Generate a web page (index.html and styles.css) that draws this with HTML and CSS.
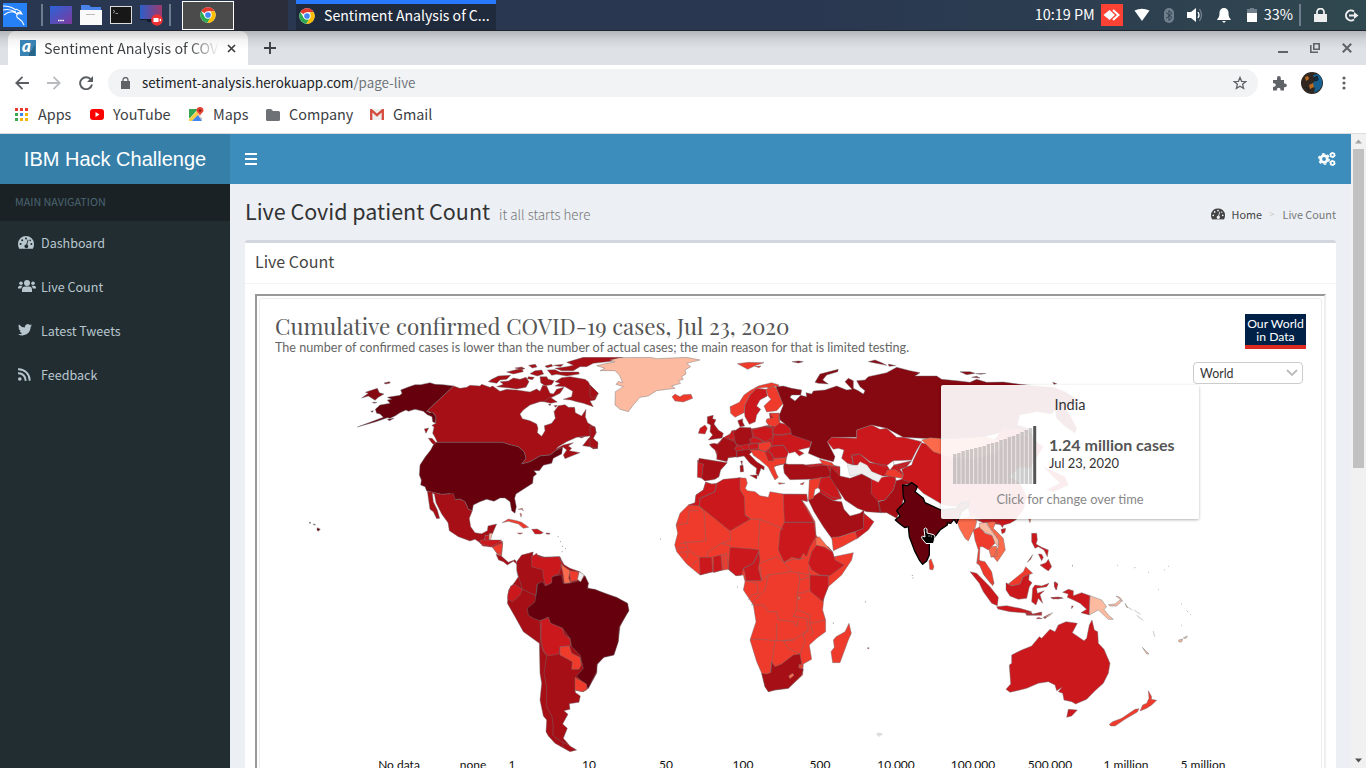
FILE: index.html
```html
<!DOCTYPE html>
<html lang="en">
<head>
<meta charset="utf-8">
<title>Sentiment Analysis of COVID</title>
<link rel="stylesheet" href="styles.css">
</head>
<body>
<svg class="defs" width="0" height="0">
  <defs>
    <linearGradient id="g1" x1="0" y1="0" x2="1" y2="1"><stop offset="0" stop-color="#2b63d9"/><stop offset="1" stop-color="#7d3a9c"/></linearGradient>
    <linearGradient id="g2" x1="0" y1="0" x2="1" y2="0"><stop offset="0" stop-color="#2b5fc9"/><stop offset="1" stop-color="#a0386c"/></linearGradient>
    <symbol id="chrome" viewBox="0 0 48 48"><circle cx="24" cy="24" r="23" fill="#fff"/><path d="M24 24 4 12.5A23 23 0 0 1 44 13H24Z" fill="#e33b2e"/><path d="M4 12.5A23 23 0 0 0 22 47L33.500 29.500 24 24 14.500 29.500Z" fill="#2da94f"/><path d="M44 13A23 23 0 0 1 22 47L33.500 29.500V13Z" fill="#fdbd00"/><circle cx="24" cy="24" r="11" fill="#fff"/><circle cx="24" cy="24" r="8.500" fill="#4384f3"/></symbol>
    <symbol id="gauge" viewBox="0 0 16 13"><path d="M8 0a8 8 0 0 0-8 8c0 1.600.4 3.300 1.200 4.700h13.600A9 9 0 0 0 16 8a8 8 0 0 0-8-8Z"/><g class="hole"><circle cx="2.600" cy="8" r="1"/><circle cx="4.200" cy="4.200" r="1"/><circle cx="8" cy="2.500" r="1"/><circle cx="13.400" cy="8" r="1"/><circle cx="12.200" cy="4.400" r=".8"/><path d="M9.800 3.600 10.600 4 9.200 8.600a1.900 1.900 0 1 1-1-.2Z"/></g></symbol>
  </defs>
</svg>

<header class="panel">
  <svg class="kali" width="24" height="24" viewBox="0 0 24 24"><rect width="24" height="24" fill="#2680f6"/><path d="M0 3c5 0 9 1 13 4M0 7c4-1 9 0 13 2M1 12c5-4 10-4 13-1M13 6c3 1 5 3 6 5-4-1-6 0-5 3 1 2 5 2 7 8M14 10c2-1 4 0 5 1" fill="none" stroke="#fff" stroke-width="1.100"/></svg>
  <i class="sep sep-a"></i>
  <svg class="pi" width="22" height="18" viewBox="0 0 22 18"><rect width="22" height="18" fill="url(#g1)"/><path d="M8 14.500h6" stroke="#fff" stroke-width="1.500" stroke-dasharray="1.500 .7"/></svg>
  <svg class="pi" width="22" height="20" viewBox="0 0 22 20"><path d="M1 6V0h8l2 2h10v4Z" fill="#4a83ea"/><rect y="5" width="22" height="15" fill="#fafafa"/><path d="M6 9.500h9" stroke="#bbb"/></svg>
  <svg class="pi" width="22" height="18" viewBox="0 0 22 18"><rect x=".5" y=".5" width="21" height="17" fill="#171717" stroke="#ddd"/><path d="m3 4 2 1.500L3 7M5.500 7.500H8" fill="none" stroke="#ccc" stroke-width=".7"/></svg>
  <svg class="pi" width="23" height="22" viewBox="0 0 23 22"><rect width="22" height="14" y="1" fill="url(#g2)"/><path d="M0 15h22v1H0zM7 16h6v2H7z" fill="#111b29"/><circle cx="17" cy="16" r="5.800" fill="#ee3135"/><rect x="13.500" y="14" width="5" height="4" fill="#fff"/><path d="m19 16 2-1.600v3.200Z" fill="#fff"/></svg>
  <i class="sep sep-b"></i>
  <div class="desk"><svg width="16" height="16"><use href="#chrome"/></svg></div>
  <div class="deskoff"></div>
  <div class="task"><svg width="16" height="16"><use href="#chrome"/></svg><span>Sentiment Analysis of C...</span></div>
  <div class="tray">
    <span class="clock">10:19 PM</span>
    <svg width="22" height="22" viewBox="0 0 22 22"><rect width="22" height="22" fill="#fb4235"/><path d="m2.500 11 6-5 5.500 5-5.500 5Z" fill="#fff"/><path d="m12 6 5.500 5-5.500 5" fill="none" stroke="#fff" stroke-width="2"/></svg>
    <svg class="wifi" width="16" height="14" viewBox="0 0 16 14"><path d="M.5 2.500Q8-1 15.500 2.500L8 13Z" fill="#fff"/></svg>
    <svg class="bt" width="12" height="15" viewBox="0 0 12 15"><rect x="1" width="10" height="15" rx="5" fill="#717f8d"/><path d="m3 4.500 6 5-3 3v-10l3 3-6 5" fill="none" stroke="#2c3f50"/></svg>
    <svg class="vol" width="16" height="14" viewBox="0 0 16 14"><path d="M0 4h4l5-4v14L4 10H0Z" fill="#fff"/><path d="M11 4q2 3 0 6" fill="none" stroke="#fff" stroke-width="1.300"/><path d="M12.500 1q4 6 0 12" fill="none" stroke="#75828c" stroke-width="1.300"/></svg>
    <svg class="bell" width="14" height="15" viewBox="0 0 14 15"><path d="M7 0a4.500 4.500 0 0 0-4.500 4.800C2.500 9 1.500 9.500 0 12h14c-1.500-2.500-2.500-3-2.500-7.200A4.500 4.500 0 0 0 7 0ZM5 13h4l-2 2Z" fill="#fff"/></svg>
    <svg class="bat" width="10" height="14" viewBox="0 0 10 14"><path d="M0 1h3V0h4v1h3v13H0Z" fill="#71808a"/><path d="M0 5h10v9H0Z" fill="#fff"/></svg>
    <span class="pct">33%</span>
    <i class="sep sep-c"></i>
    <svg class="plock" width="13" height="14" viewBox="0 0 13 14"><path d="M0 6h13v8H0Z" fill="#eee"/><path d="M3 7V4a3.500 3.500 0 0 1 7 0v3" fill="none" stroke="#eee" stroke-width="1.800"/></svg>
    <svg class="logout" width="15" height="13" viewBox="0 0 15 13"><path d="M10 2.500A5 5 0 1 0 10 10.500" fill="none" stroke="#eee" stroke-width="2"/><path d="M5 6.500h6" stroke="#eee" stroke-width="2"/><path d="m10 3 4.500 3.500L10 10Z" fill="#eee"/></svg>
  </div>
</header>

<div class="tabs">
  <div class="tab">
    <svg width="16" height="16" viewBox="0 0 16 16"><rect width="16" height="16" fill="#3883b4"/><path d="m9 14 6-9v11H9Z" fill="#276588"/></svg>
    <b class="fav">a</b>
    <span class="tabname">Sentiment Analysis of COV</span>
    <svg class="tabx" width="9" height="9" viewBox="0 0 9 9"><path d="m1 1 7 7M8 1 1 8" stroke="#3c4043" stroke-width="1.700"/></svg>
  </div>
  <svg class="plus" width="12" height="12" viewBox="0 0 12 12"><path d="M6 0v12M0 6h12" stroke="#3c4043" stroke-width="1.900"/></svg>
  <div class="win">
    <svg width="10" height="10" viewBox="0 0 10 10"><path d="M0 9h10" stroke="#5f6368" stroke-width="2"/></svg>
    <svg width="10" height="10" viewBox="0 0 10 10"><path d="M3.800.8h5.400v5.400H3.800ZM.8 2v7.200H8" fill="none" stroke="#5f6368" stroke-width="1.600"/></svg>
    <svg width="10" height="10" viewBox="0 0 10 10"><path d="m.8.800 8.400 8.400M9.200.8.8 9.200" stroke="#5f6368" stroke-width="2"/></svg>
  </div>
</div>

<div class="toolbar">
  <svg class="nav" width="14" height="14" viewBox="0 0 14 14"><path d="M14 7H1.500M7.500.8 1.300 7l6.200 6.200" fill="none" stroke="#5a5e63" stroke-width="1.800"/></svg>
  <svg class="nav" width="14" height="14" viewBox="0 0 14 14"><path d="M0 7h12.500M6.500.8 12.700 7l-6.200 6.200" fill="none" stroke="#b9bbbe" stroke-width="1.800"/></svg>
  <svg class="nav reload" width="14" height="14" viewBox="0 0 14 14"><path d="M12 3.700A6 6 0 1 0 13 8.500" fill="none" stroke="#5a5e63" stroke-width="1.900"/><path d="M14 0v6H8Z" fill="#5a5e63"/></svg>
  <div class="url">
    <svg width="9" height="12" viewBox="0 0 9 12"><path d="M0 4h9v8H0Z" fill="#5f6368"/><path d="M2 5V3a2.500 2.500 0 0 1 5 0v2" fill="none" stroke="#5f6368" stroke-width="1.300"/></svg>
    <span>setiment-analysis.herokuapp.com<em>/page-live</em></span>
    <svg class="star" width="14" height="14" viewBox="0 0 14 14"><path d="m7 1.400 1.600 3.900 4.200.3-3.200 2.700 1 4.100L7 10.200l-3.600 2.200 1-4.100L1.200 5.600l4.200-.3Z" fill="none" stroke="#5f6368" stroke-width="1.300"/></svg>
  </div>
  <svg class="puz" width="15" height="15" viewBox="0 0 15 15"><path d="M1 4h4V2a1.900 1.900 0 0 1 3.800 0v2H12v3.500h1a1.800 1.800 0 0 1 0 3.700h-1V14.500H8.500v-1a1.800 1.800 0 0 0-3.600 0v1H1v-3.700h1a1.700 1.700 0 0 0 0-3.500H1Z" fill="#5f6368"/></svg>
  <svg class="ava" width="22" height="22" viewBox="0 0 22 22"><circle cx="11" cy="11" r="11" fill="#302820"/><path d="M12 3q7-3 9 5 2 9-8 13l1-5-3-3 3-5Z" fill="#17608f"/><path d="m4 5 3-1 1 3-3 2ZM8 13l4-2 1 4-4 2Z" fill="#b96a20"/><path d="m13 6 3-2 1 4-3 1ZM5 15l3 4" stroke="#111f2b" fill="#173040"/></svg>
  <svg class="dots" width="4" height="14" viewBox="0 0 4 14"><g fill="#5f6368"><circle cx="2" cy="2" r="1.600"/><circle cx="2" cy="7" r="1.600"/><circle cx="2" cy="12" r="1.600"/></g></svg>
</div>

<nav class="marks">
  <a class="m1"><svg width="13" height="13" viewBox="0 0 13 13"><path d="M0 1.500h13" stroke="#e8382c" stroke-width="3" stroke-dasharray="3 2"/><path d="M0 6.500h3" stroke="#3ba757" stroke-width="3"/><path d="M5 6.500h3" stroke="#3f83f0" stroke-width="3"/><path d="M10 6.500h3" stroke="#f4b400" stroke-width="3"/><path d="M0 11.500h3" stroke="#3ba757" stroke-width="3"/><path d="M5 11.500h8" stroke="#f4b400" stroke-width="3" stroke-dasharray="3 2"/></svg><span>Apps</span></a>
  <a class="m2"><svg width="14" height="11" viewBox="0 0 14 11"><rect width="14" height="11" rx="3" fill="#f00"/><path d="m5.500 3 4 2.500-4 2.500Z" fill="#fff"/></svg><span>YouTube</span></a>
  <a class="m3"><svg width="15" height="15" viewBox="0 0 15 15"><path d="M0 2h13v12H0Z" fill="#fff"/><path d="M0 2h9L1 11H0Z" fill="#35a652"/><path d="m0 12 8-8 2 4-7 6H0Z" fill="#f6cd45"/><path d="m3 14 6-6 4 6Z" fill="#4384f3"/><path d="m10 9 3 2v3Z" fill="#bbb"/><path d="M11 0a3.500 3.500 0 0 0-3.500 3.500C7.500 6 11 6 11 10c0-4 3.500-4 3.500-6.500A3.500 3.500 0 0 0 11 0Z" fill="#e64335"/><circle cx="11" cy="3.500" r="1.200" fill="#811f18"/></svg><span>Maps</span></a>
  <a class="m4"><svg width="14" height="12" viewBox="0 0 14 12"><path d="M0 1.500Q0 0 1.500 0H5l2 2h5.500Q14 2 14 3.500v7q0 1.500-1.500 1.500h-11Q0 12 0 10.500Z" fill="#6e7276"/></svg><span>Company</span></a>
  <a class="m5"><svg width="14" height="11" viewBox="0 0 14 11"><path d="M0 0h14v11H0Z" fill="#eee"/><path d="M1.200 11V1L7 6.200 12.800 1v10" fill="none" stroke="#d54b3d" stroke-width="2.300"/></svg><span>Gmail</span></a>
</nav>

<div class="page">
  <aside class="side">
    <div class="brand">IBM Hack Challenge</div>
    <div class="sidehead">MAIN NAVIGATION</div>
    <a class="item"><svg width="16" height="13"><use href="#gauge"/></svg>Dashboard</a>
    <a class="item"><svg width="18" height="13" viewBox="0 0 18 13"><circle cx="9" cy="3" r="3"/><circle cx="3" cy="3.200" r="1.800"/><circle cx="15" cy="3.200" r="1.800"/><path d="M4 12V10q0-3.400 3-3.400h4q3 0 3 3.400v2ZM0 8.500V7.500Q0 5.700 2 5.700h2.500Q3.500 7 3.200 8.500ZM18 8.500V7.500q0-1.800-2-1.800h-2.500q1 1.300 1.300 2.800Z"/></svg>Live Count</a>
    <a class="item"><svg width="14" height="12" viewBox="0 0 14 12"><path d="M14 1.400q-.7.300-1.600.5Q13.300 1.300 13.600.3q-.8.500-1.800.7A2.900 2.900 0 0 0 6.900 3.600Q3.200 3.500 1 .6A2.900 2.900 0 0 0 1.800 4.400L.6 4Q.7 6.300 2.900 6.900l-1.300.1q.6 1.800 2.700 2Q2.500 10.500 0 10.200 2 11.400 4.400 11.400c5.300 0 8.300-4.400 8.200-8.500Q13.500 2.200 14 1.400Z"/></svg>Latest Tweets</a>
    <a class="item"><svg width="13" height="13" viewBox="0 0 13 13"><circle cx="1.800" cy="11" r="1.800"/><path d="M0 5.200A7 7 0 0 1 7.500 12.800M0 1.200A11 11 0 0 1 11.600 12.800" fill="none" stroke="#b8c7ce" stroke-width="1.900"/></svg>Feedback</a>
  </aside>
  <div class="main">
    <div class="navbar">
      <svg width="12" height="12" viewBox="0 0 12 12"><path d="M0 1h12M0 6h12M0 11h12" stroke="#fff" stroke-width="2"/></svg>
      <svg width="18" height="14" viewBox="0 0 18 14"><circle cx="6" cy="7" r="3.300" fill="none" stroke="#fff" stroke-width="2.800"/><circle cx="6" cy="7" r="5.200" fill="none" stroke="#fff" stroke-width="1.600" stroke-dasharray="2.700 2.740"/><g fill="none" stroke="#fff"><circle cx="14.500" cy="3" r="1.900" stroke-width="1.700"/><circle cx="14.500" cy="3" r="2.700" stroke-width=".8" stroke-dasharray="1.400"/><circle cx="14.500" cy="11" r="1.900" stroke-width="1.700"/><circle cx="14.500" cy="11" r="2.700" stroke-width=".8" stroke-dasharray="1.400"/></g></svg>
    </div>
    <div class="heading">
      <h1>Live Covid patient Count</h1><small>it all starts here</small>
      <div class="crumb"><svg width="14" height="12" viewBox="0 0 16 13"><use href="#gauge"/></svg><span class="home">Home</span><span class="gt">&gt;</span><span class="cur">Live Count</span></div>
    </div>
    <section class="box">
      <h3>Live Count</h3>
      <div class="frame"><div class="chart">
        <div class="chead">
          <div><h2>Cumulative confirmed COVID-19 cases, Jul 23, 2020</h2><p>The number of confirmed cases is lower than the number of actual cases; the main reason for that is limited testing.</p></div>
          <div class="owid">Our World<br>in Data</div>
        </div>
        <svg class="map" width="1060" height="414" viewBox="260 357 1060 414">
          <g class="c" transform="translate(300 350) scale(.33333)">
            <path class="k6" d="M302 120 325 111 345 104 362 104 390 98 405 103 430 104 461 108 380 184 390 188 396 184 408 200 407 220 398 215 396 200 382 194 370 184 345 178 325 184 318 180 300 188 285 198 270 205 262 203 225 216 172 231 210 217 250 202 240 192 230 190 226 178 240 165 270 160 262 150 275 148 262 142 300 136 306 130Z"/>
            <path class="k6" d="M28 516l5 3-4 1ZM40 521l7 4-5 0ZM52 533l9 5-7 6-3-5ZM212 184l8-2-3 5ZM262 208l20-3-14 7Z"/>
            <path class="k5" d="M185 144 205 130 196 127 232 115 238 128 252 132 235 142 225 151 205 138ZM252 99l16-4 3 4-14 3ZM217 157l14 0-8 3Z"/>
            <path class="k4" d="M461 108 480 115 500 112 510 106 540 108 545 103 570 112 578 108 600 124 620 118 650 120 690 126 710 117 720 124 728 106 740 108 750 130 760 132 770 118 792 112 780 130 750 145 735 155 720 155 690 165 670 180 660 192 667 206 690 212 710 222 714 235 712 248 725 259 735 242 733 227 755 220 766 205 762 185 775 167 795 164 805 172 824 172 826 188 845 198 858 178 856 200 863 218 885 232 889 248 870 258 830 262 800 275 775 290 768 297 790 285 820 278 805 288 815 295 808 302 840 308 820 316 795 326 790 315 800 300 790 292 770 300 750 315 720 318 690 335 665 342 678 325 672 305 655 290 625 283 608 277 412 277 405 262 398 250 402 232 396 226 408 220 408 200 400 188 380 184Z"/>
            <path class="k4" d="M848 287 868 262 878 264 870 277 893 275 893 295 880 297 870 290ZM385 265 396 265 413 283 408 290 395 278ZM373 237 386 234 378 250ZM765 95 785 83 810 80 855 88 865 95 870 105 895 130 885 150 870 153 880 170 850 160 830 155 812 150 790 148 815 140 818 124 795 110 765 108 780 100ZM800 37 850 22 970 22 935 34 880 40 860 50 840 50 820 62 785 62 765 55 800 50 820 46ZM600 95 625 93 640 84 660 88 678 82 687 95 678 112 650 117 620 113 590 110 610 103ZM565 95 575 88 595 78 632 76 620 88 600 90 590 100ZM620 66 665 55 670 65 640 72ZM645 54l20-3 10 5-12 3ZM686 46l20-3 5 8-14 3ZM690 71 705 62 725 60 731 72 712 78ZM720 80 740 80 745 88 763 92 755 104 735 107 722 98ZM742 60 765 59 780 66 836 66 838 72 800 78 770 73 755 76ZM735 48l20-5 3 6-17 4ZM760 46l30-3-8 7ZM685 80l18 2-6 7-15-3ZM732 155l18-14 22 15-20 4ZM745 163l8-1-3 5ZM762 167l10-1-5 6ZM838 262l18-4-10 6Z"/>
            <path class="k6" d="M410 277H608L625 283 655 290 672 305 678 325 665 342 690 335 720 318 750 315 770 300 788 292 785 312 760 325 755 340 730 346 718 362 702 362 710 372 700 380 698 400 670 418 648 432 644 445 649 470 645 490 635 482 630 455 615 444 600 444 582 454 560 448 540 455 520 465 517 482 505 478 495 455 480 447 465 450 450 431 425 433 395 427 380 423 375 410 362 405 364 390 358 375 360 345 375 322 392 300 400 285Z"/>
            <path class="k4" d="M382 423 425 433 460 431 466 450 480 447 495 455 505 478 517 482 508 505 512 530 525 548 545 551 562 542 564 528 590 522 580 545 577 552 568 556 556 556 554 568 540 578 525 568 510 573 475 560 448 542 444 518 425 492 408 458 403 432 397 430 400 455 412 480 419 505 410 506 400 485 390 478 388 465 385 445Z"/>
            <path class="k3" d="M540 578 554 568 556 556 568 556 568 574 608 574 606 583 580 592 548 588ZM695 538 712 537 730 548 722 552 705 552ZM690 610 697 607 700 620 720 618 735 622 780 622 790 640 800 660 720 660 695 640Z"/>
            <path class="k1" d="M568 550 577 550 572 570 567 568Z"/>
            <path class="k2" d="M580 594 608 580 605 618 592 613ZM607 518 625 507 650 512 665 517 686 532 670 535 655 522 625 514ZM652 549l16 0-8 4ZM655 478l12-3 3 8-4-5ZM660 489l5 4-2 8Z"/>
            <path class="k4" d="M588 613 604 618 625 637 645 629 654 645 640 634 622 645 610 635 596 630ZM738 549l12 1-2 3-9-1Z"/>
            <path class="isl" d="M773 560h3M780 575h3M786 589h3M785 605h3M795 596h3"/>
          </g>
          <g class="c" transform="translate(480 540) scale(.33333)">
            <path class="k4" d="M110 65 125 45 160 36 155 50 175 45 190 52 240 50 245 70 270 85 300 95 315 108 325 145 370 158 410 175 440 190 445 210 420 260 415 300 400 345 370 352 350 375 350 400 325 445 310 455 285 450 287 458 301 468 297 487 268 491 270 508 252 512 264 523 248 552 262 565 250 595 270 618 290 630 270 635 225 610 205 588 198 575 200 540 190 528 180 480 185 430 180 400 178 310 130 275 105 230 82 190 86 150 105 125 115 110 110 90Z"/>
            <path class="k6" d="M172 132 188 125 195 137 213 130 215 110 245 104 250 130 265 130 300 122 315 108 326 130 322 145 345 148 370 158 410 172 443 190 447 212 418 260 415 305 402 345 372 352 352 372 350 395 325 445 290 408 310 385 300 345 275 320 270 295 248 265 210 250 205 232 180 242 160 235 145 225 142 205 165 185Z"/>
            <path class="k3" d="M155 50 170 40 175 50 195 52 237 50 245 70 238 100 216 110 215 128 197 137 190 110 188 90 155 80ZM180 243 205 232 212 250 248 265 252 285 270 295 272 318 240 320 238 342 205 348 190 335 183 300ZM92 138 105 133 127 148 120 165 98 185 83 178 83 165ZM0 0h65l-12 10-23 10-30-10Z"/>
            <path class="k2" d="M240 320 268 318 275 340 300 352 304 375 297 388 275 388 277 365 240 345ZM285 412 320 432 320 450 305 455 285 450ZM268 92 295 95 293 120 272 125ZM37 22 68 8 65 38 52 40Z"/>
            <path class="k1a" d="M243 72 255 82 270 92 266 115 272 128 253 130 250 105Z"/>
            <path class="kn" d="M298 95 312 105 302 125 293 118Z"/>
            <path class="ln" d="M110 95 122 130 127 148 168 167 172 132M185 248 180 310 200 350 192 400 200 440 200 500 216 530 220 560 218 585 240 602 265 615M248 605l2 18"/>
          </g>
          <g class="c" transform="translate(590 350) scale(.33333)">
            <path class="k3" d="M432 245 485 236 525 230 545 228 600 245 640 262 605 298 588 310 588 340 548 350 530 338 508 306 484 306 440 320 385 328 372 292 402 262Z"/>
            <path class="k3" d="M538 190 568 190 570 235 545 235ZM645 345 700 340 750 350 750 400 690 400 660 388Z"/>
            <path class="k1" d="M20 47 50 40 75 36 60 30 90 23 180 22 200 26 290 22 330 30 290 40 302 50 285 60 288 72 275 80 280 88 265 92 272 100 245 108 255 115 200 122 175 138 150 142 130 165 115 185 90 178 75 165 76 125 100 110 78 103 85 94 98 98 88 75 75 62 30 62 45 55Z"/>
            <path class="k2" d="M246 140 255 132 270 140 280 134 303 133 308 145 280 156 255 153ZM442 41 475 37 522 38 500 45 473 58 455 48ZM495 49l18-1-6 5ZM420 170 448 157 462 135 480 122 505 108 545 98 567 105 563 112 550 108 540 116 530 112 500 115 480 135 465 165 462 188 435 202 422 190ZM528 118 550 108 560 115 570 140 580 160 560 182 530 186 522 168 543 148 534 138ZM540 190 568 190 566 210 572 222 560 232 535 225 528 215 530 207 550 203ZM505 280 540 275 545 290 525 305 505 298ZM482 300 505 300 530 305 537 330 553 325 590 323 585 342 560 346 552 352 560 372 565 382 555 390 545 372 535 352 510 330 490 316ZM565 398l20 2-18 3ZM630 402l13-5-5 8Z"/>
            <path class="k3" d="M325 250 330 235 345 225 352 235 345 252ZM463 186 465 165 480 135 500 115 528 118 532 138 510 150 500 168 512 178 500 195 496 215 478 223 465 200ZM550 235 570 218 595 225 607 248 575 257 548 252ZM485 240 525 228 547 235 550 262 525 276 495 262ZM415 265 425 242 435 240 433 267 420 270ZM323 330 341 340 337 385 322 382ZM433 292 450 287 460 300 440 305ZM475 285 505 278 505 295 480 299ZM478 265 500 262 523 275 500 281 480 278ZM524 303 545 310 552 332 535 333ZM540 290 580 285 595 308 590 322 555 325 538 305ZM550 255 610 250 640 262 665 270 660 292 625 300 642 310 628 318 615 305 598 310 580 286 545 287Z"/>
            <path class="k4" d="M352 200 370 196 368 206 378 209 372 222 385 240 400 250 396 264 355 270 368 255 360 245 362 225 352 220ZM443 212 458 206 458 216 464 228 450 230ZM430 245 450 232 483 233 488 262 478 268 483 280 450 287 436 280ZM358 283 372 280 385 283 400 262 435 275 440 288 433 295 440 305 440 320 415 322 411 335 380 328 382 305 365 292ZM327 325 412 338 392 360 387 380 375 388 345 393 335 385 340 342 325 338ZM440 303 475 298 485 306 478 313 500 335 523 350 522 360 513 355 505 378 498 370 500 355 480 340 462 318 440 322ZM480 376l22-1-2 12ZM450 347l9-2 2 20-10 1ZM452 333l5 0-1 12ZM525 228l14 -2 0 5ZM580 350 583 340 595 343 640 343 660 350 705 345 720 350 725 380 690 385 655 388 600 389 583 370ZM0 228 15 230 18 250 10 265 24 278 22 296 0 290ZM0 105 25 130 10 145 0 140Z"/>
          </g>
          <g class="c" transform="translate(660 460) scale(.33333)">
            <path class="k2" d="M137 67 155 72 170 70 240 53 258 55 262 70 256 85 262 92 285 95 300 107 325 112 330 95 370 102 440 103 443 122 425 120 440 140 465 185 468 225 480 240 515 275 522 290 580 278 575 300 545 345 505 380 492 410 488 450 497 480 497 515 470 535 448 555 455 598 430 612 428 645 385 685 345 690 325 695 315 680 305 640 290 605 270 540 288 485 280 435 250 390 255 365 250 345 228 347 205 328 160 335 120 345 80 312 50 275 44 255 53 220 48 195 60 160 85 135 105 130 108 105 130 90Z"/>
            <path class="k3" d="M137 67 155 72 170 72 165 95 120 115 118 138 85 135 105 128 108 105 130 90ZM170 70 190 58 240 53 240 90 253 110 255 165 272 177 210 213 118 138 120 115 165 95ZM370 103 440 103 442 125 425 120 462 187 373 187ZM373 187H462L468 230 450 260 440 290 430 280 420 298 395 292 372 307 355 270 360 215ZM210 262 280 267 298 270 280 310 250 325 245 345 228 347 205 328ZM297 275 300 300 295 325 305 362 258 362 255 340 250 325 280 310ZM118 292 155 292 158 335 120 345ZM160 290 183 285 187 330 160 338ZM470 255 505 260 518 275 525 300 553 315 510 347 480 345 455 330 445 310 455 275ZM450 345 505 348 505 380 488 425 450 393ZM612 160 642 185 625 210 590 237 585 215 608 205ZM480 55 515 50 530 80 545 115 520 122 480 100Z"/>
            <path class="k4" d="M445 120 478 97 520 122 545 125 552 148 570 168 600 160 612 150 610 205 585 215 540 230 515 235 490 200 462 155ZM305 640 320 642 332 638 335 605 345 620 365 612 400 585 420 582 425 612 415 620 430 628 425 645 385 685 345 690 325 695 315 680Z"/>
            <path class="k2" d="M515 232 540 230 585 215 592 235 550 258 520 272ZM448 60 486 52 480 80 465 88 460 115 445 120ZM417 612l10 4 0 10-10-2ZM520 540 528 530 555 515 567 490 574 520 565 540 540 608 518 608 513 575 523 562Z"/>
            <path class="k1a" d="M468 235 478 230 515 275 495 262 468 255ZM386 648 398 640 402 646 390 656ZM412 410l10 2-5 8Z"/>
            <path class="ln" d="M48 195 82 190 88 150 115 152M118 138 132 155 138 242 60 250M75 243 85 270 118 292M210 213 212 240 185 250 145 275 140 292M185 250 212 258 210 262M183 285 200 280 205 328M192 283v45M272 177 300 178 372 208M300 178 295 262M255 165 272 177M300 310 350 290 372 307 395 335 325 345 305 362 300 320M395 335 450 345 445 320M372 307 400 298 435 295M325 345 315 390 280 425 275 435 310 435 325 455 350 455 355 480 400 485 410 500 415 480M415 340 420 360 412 400 410 450 400 470 440 475 445 510 400 540 370 542M258 362 290 370 295 400 275 405 265 420M270 540 290 537 345 542 400 540M350 490 350 542M345 545 340 575 332 638M370 542 385 565 420 582 435 545 430 525 445 510M415 450 450 465 450 490 497 480M450 490 460 520 450 528M420 360 450 350M412 400 450 393M50 265 75 262M60 277 85 275 80 295M95 320l15-20"/>
            <path class="isl" d="M0 237h3M231 381h3M518 488l4 3M615 426h2"/><path class="k2" d="M623 563h4v3h-4Z"/>
          </g>
          <g class="c" transform="translate(770 350) scale(.33333)">
            <path class="k5" d="M18 110 40 108 65 115 95 120 92 135 65 135 60 142 75 153 92 136 110 140 108 128 125 132 130 123 165 120 200 108 230 120 246 118 225 95 235 85 250 92 250 115 265 122 280 132 285 122 270 110 260 92 285 90 295 80 350 68 380 52 420 62 450 68 435 78 500 78 515 88 560 92 600 97 620 88 650 97 700 96 750 103 800 108 850 112 885 125 925 150 920 160 885 175 900 195 920 235 915 250 880 225 860 205 855 180 845 192 800 185 750 195 742 225 775 235 800 280 810 300 785 285 770 250 720 240 640 262 540 268 455 265 400 262 350 235 305 225 260 240 260 262 185 262 172 275 195 320 190 335 150 325 115 310 125 275 65 255 60 235 30 210 28 195 40 165ZM135 97 150 72 205 58 203 65 170 75 158 90 175 102 145 100ZM295 35 315 30 335 38 350 46ZM355 42l22 5-20 2ZM66 35l20-2 14 2-15 4ZM570 65 600 65 616 70 590 74ZM618 71l30-1-15 3ZM605 82l15-3 10 5ZM848 97l12 4-8 2Z"/>
            <path class="k3" d="M172 275 185 262 260 265 260 240 305 225 330 238 350 235 380 262 400 262 455 275 440 300 425 330 370 332 345 350 330 345 300 335 270 312 245 318 250 345 232 340 215 325 222 300 205 295 190 298ZM245 314 270 312 300 338 350 345 360 360 372 345 425 332 410 350 395 358 400 375 345 378 335 378 305 365 290 345 250 345ZM455 278 430 330 425 345 390 358 400 372 395 390 425 400 440 410 460 430 520 465 560 470 590 455 600 500 640 510 660 520 700 525 735 510 760 480 770 440 750 400 720 380 750 350 780 355 820 290 790 270 750 240 700 235 650 300 560 310ZM303 390 345 380 375 375 378 392 370 420 345 450 315 455 302 430ZM152 385 180 380 200 410 212 448 185 440 145 415ZM170 345 205 352 200 368 180 365ZM820 350 885 380 895 405 850 425 830 420 870 400Z"/>
            <path class="kn" d="M232 345 262 347 270 335 290 345 305 365 337 378 325 397 300 385 275 372 240 378Z"/>
            <path class="k4" d="M182 352 187 355 210 378 240 385 275 372 305 388 303 430 325 455 333 488 290 485 262 475 225 450 205 420 180 382ZM325 455 345 450 370 420 378 392 395 388 430 400 400 405 405 435 390 480 380 505 350 488 330 488Z"/>
            <path class="k2" d="M148 328 185 338 195 348 160 345ZM345 375 352 360 375 358 400 375 395 385 365 380Z"/>
            <path class="k1a" d="M455 270 480 263 540 268 650 262 700 275 680 310 600 330 540 320 510 312 490 305Z"/>
            <path class="ln" d="M370 332 372 345 395 350 425 332M395 365 380 352"/>
          </g>
          <g class="c" transform="translate(860 460) scale(.33333)">
            <path class="k1a" d="M290 180 345 165 350 185 345 205 338 215 325 243 315 235 298 205ZM375 180 410 182 400 205 430 235 436 270 412 305 400 290 415 260 415 240 390 205ZM385 262 410 258 412 288 393 292ZM505 175h8l-3 13Z"/>
            <path class="k2" d="M340 210 360 200 375 220 400 228 405 250 385 270 368 260 360 260 358 300 372 325 350 310 355 270 345 240ZM357 305 385 325 402 370 398 377 372 345ZM207 302 213 296 222 320 218 330 209 328ZM445 372 490 335 497 320 518 340 490 350 480 372 455 378Z"/>
            <path class="k1" d="M358 190 375 187 390 205 415 240 415 260 405 248 395 225 378 218 360 205Z"/>
            <path class="k3" d="M345 178H470L450 190 430 195 428 203 420 192 400 185 370 188ZM423 208l14-3-2 12-9 4ZM330 335 350 340 390 380 415 412 412 437 395 430 370 395 358 370ZM410 440 440 437 480 445 515 455 510 460 450 455 414 447ZM438 368 455 378 480 372 490 350 508 343 506 360 516 368 508 380 500 415 475 418 450 408 438 390ZM518 385 525 375 545 378 567 370 560 380 530 385 532 400 553 392 540 404 548 430 535 415 528 435 515 425ZM515 220 530 220 532 240 528 252 545 262 565 270 562 290 552 270 535 260 525 265 515 245ZM540 315 558 308 565 298 575 320 565 333 553 325ZM535 282 545 283 550 292 545 302ZM502 307 518 284 512 298ZM498 461 525 462 545 456 545 466 500 466ZM535 472l12 4-18 0ZM550 472 570 462 555 476ZM585 365 592 370 590 390 583 380ZM573 413l33-1-10 5ZM250 178l20 0 4 12-15 0Z"/>
            <path class="india" d="M128 75 142 77 155 68 172 80 165 95 190 115 195 128 243 150 290 145 300 130 325 125 325 140 305 155 290 190 282 178 272 190 262 188 262 195 240 210 225 230 208 245 208 285 200 303 188 313 178 300 165 275 148 230 145 200 135 203 120 192 106 180 120 168 110 152 135 125 130 110Z"/>
            <path class="isl" d="M157 345v3M157 354h3M16 425h2M636 318h3"/>
          </g>
          <g class="c" transform="translate(960 560) scale(.33333)">
            <path class="k3" d="M308 97 325 88 340 92 340 107 365 98 390 107 388 165 363 158 380 148 360 130 345 122 322 112 325 102ZM282 66 294 72 288 90 284 80ZM272 113l22-2 16 4-30 2ZM335 138l5 0-5 8ZM196 160l20-2 0 6-15 0ZM220 162l23-5-3 5-15 3ZM138 388 152 372 148 315 155 310 155 285 185 270 215 258 238 230 245 235 270 208 285 215 295 195 318 185 352 190 337 218 372 242 380 235 388 195 396 180 403 210 413 215 415 250 432 268 450 310 445 340 430 370 405 392 380 418 347 432 335 425 312 420 308 400 295 395 306 382 290 392 285 375 265 365 235 370 200 385 150 397ZM325 448 352 450 335 468 320 472Z"/>
            <path class="k1" d="M390 107 425 120 440 140 432 148 445 165 460 178 445 178 415 150 388 165ZM445 134 465 132 480 120 485 124 470 138 450 138ZM468 108 480 112 488 124ZM495 130l10 14-5-2ZM250 173 278 158 268 168ZM547 262l20 20-7 0ZM656 240l12-3-3 9-8 0ZM670 234l12-6-4 7Z"/>
            <path class="k2" d="M448 493 458 485 485 475 525 448 537 446 532 456 495 478 465 498 452 498ZM540 453 548 435 560 430 567 415 565 392 575 410 574 418 590 421 575 435 560 445ZM52 0 75 5 95 35 102 70 92 70 70 42Z"/>
            <path class="kn" d="M508 143l9 7-7-3ZM522 150l20 13-10-5ZM530 165l20 16-14-8ZM580 213l5 18-4-9Z"/>
            <path class="isl" d="M336 16h2M471 16h2M523 23h3M565 37h2M612 30h2M625 19h2M595 88h2M664 132h2M680 152l3 3M690 164h2M664 196h2"/>
          </g>
          <path d="M876 734q3-3 7 0l-4 3Z" fill="#ddd"/>
          <g class="legend"><text x="399" y="769">No data</text><text x="473" y="769">none</text><text x="512" y="769">1</text><text x="589" y="769">10</text><text x="666" y="769">50</text><text x="743" y="769">100</text><text x="820" y="769">500</text><text x="896" y="769">10,000</text><text x="973" y="769">100,000</text><text x="1050" y="769">500,000</text><text x="1126" y="769">1 million</text><text x="1203" y="769">5 million</text></g>
        </svg>
        <div class="select">World<svg width="12" height="8" viewBox="0 0 12 8"><path d="m1 1 5 5 5-5" fill="none" stroke="#bbb" stroke-width="1.800"/></svg></div>
        <div class="tip">
          <div class="tname">India</div>
          <div class="tbody">
            <svg width="84" height="60" viewBox="0 0 84 60"><path d="M1.700 59V29M5.900 59V28M10.100 59V26M14.300 59V25M18.500 59V24M22.800 59V23M27 59V22M31.200 59V21M35.400 59V19M39.600 59V18M43.800 59V17M48 59V15M52.200 59V14M56.400 59V12M60.600 59V11M64.900 59V9M69.100 59V7M73.300 59V5M77.500 59V3" stroke="#999" stroke-opacity=".5" stroke-width="3.400"/><path d="M81.700 59V1" stroke="#555" stroke-width="3"/></svg>
            <div class="tval"><b>1.24 million cases</b><span>Jul 23, 2020</span></div>
          </div>
          <div class="tclick">Click for change over time</div>
        </div>
        <svg class="hand" width="15" height="18" viewBox="0 0 15 18"><path d="M3 2q1.500-2 3 0v4l6 1.500q2 .5 2 2.500l-1.500 6.500H5L1 11.500q-1-2 .5-2.500L4 10Z" fill="#000" stroke="#fff"/><path d="M8 8v2M10.300 8.500v2" stroke="#fff" stroke-width=".5"/></svg>
      </div></div>
    </section>
  </div>
  <div class="scroll"><svg width="15" height="15" viewBox="0 0 15 15"><path d="m4 9.500 3.500-4 3.500 4Z" fill="#a3a3a3"/></svg><div class="thumb"></div></div>
  <svg class="sdown" width="15" height="15" viewBox="0 0 15 15"><path d="m4 5.500 3.500 4 3.500-4Z" fill="#505050"/></svg>
</div>
</body>
</html>
```
FILE: styles.css
```css
* { box-sizing: border-box; }
body { margin: 0; width: 1366px; height: 768px; overflow: hidden; background: #fff; font-family: "Noto Sans CJK SC", "Noto Sans", sans-serif; font-size: 15px; color: #3c4043; display: flex; flex-direction: column; }
svg { display: block; flex: none; }
.defs { position: absolute; }
h1, h2, h3, p { margin: 0; font-weight: 400; }
a { color: inherit; text-decoration: none; }
span { white-space: nowrap; }

.panel { height: 31px; flex: none; display: flex; align-items: center; background: linear-gradient(90deg, #293850 0, #293850 60%, #2c3c50 75%, #30484f 100%); border-bottom: 1px solid #1d242e; color: #fff; font-size: 14.100px; }
.kali { margin-left: 3px; }
.sep { width: 2px; height: 22px; background: #6f7c8d; }
.sep-a { margin: 0 7px 0 14px; }
.pi { margin-right: 8px; }
.sep-b { margin-left: -2px; margin-right: 11px; }
.desk { width: 52px; height: 29px; border: 1px solid #fff; background: #4b4b4b; display: flex; align-items: center; justify-content: center; }
.deskoff { width: 54px; height: 30px; background: #2b2d3a; margin-right: 8px; }
.task { width: 200px; height: 30px; border-top: 4px solid #2777ff; background: #1f2a3d; display: flex; align-items: center; padding-left: 3px; line-height: 22px; }
.task span { margin-left: 9px; margin-top: -5px; }
.task svg { margin-top: -3px; }
.tray { margin-left: auto; display: flex; align-items: center; padding-right: 7px; line-height: 28px; }
.clock { margin-right: 6px; margin-top: -2px; font-size: 14.400px; }
.wifi { margin-left: 11px; }
.bt { margin-left: 13px; }
.vol { margin-left: 12px; }
.bell { margin-left: 14px; }
.bat { margin-left: 16px; }
.pct { margin-left: 7px; margin-top: -2px; font-size: 14.400px; }
.sep-c { margin-left: 6px; }
.plock { margin-left: 13px; }
.logout { margin-left: 17px; }

.tabs { height: 34px; flex: none; display: flex; background: linear-gradient(#b4b7ba 0, #d0d3d8 9px, #dee1e6 18px); }
.tab { width: 240px; height: 34px; margin-left: 8px; padding-left: 12px; display: flex; align-items: center; border-radius: 8px 8px 0 0; background: linear-gradient(#d0d0d0 0, #f4f4f4 9px, #fff 18px); position: relative; }
.fav { position: absolute; left: 14px; top: 3px; font: italic 900 17px/24px Lato, sans-serif; color: #fff; }
.tabname { margin: -1px 0 0 8px; width: 180px; line-height: 34px; font-size: 14.300px; background: linear-gradient(90deg, #3c4043 143px, #fff 176px); color: transparent; -webkit-background-clip: text; background-clip: text; }
.tabx { margin-left: 3px; }
.plus { margin: 11px 0 0 16px; }
.win { margin-left: auto; display: flex; gap: 22px; padding: 12px 14px 0 0; }

.toolbar { height: 36px; flex: none; display: flex; align-items: center; padding-left: 15px; }
.nav { margin-right: 18px; }
.reload { margin-right: 15px; }
.url { width: 1150px; height: 28px; border-radius: 14px; background: #f1f3f4; display: flex; align-items: center; padding: 0 11px 0 13px; font-size: 13.350px; line-height: 26px; color: #202124; }
.url span { margin-left: 12px; }
.url em { font-style: normal; color: #70757a; }
.star { margin-left: auto; }
.puz { margin-left: 14px; }
.ava { margin-left: 14px; }
.dots { margin-left: 19px; }
.marks { height: 33px; flex: none; display: flex; align-items: center; border-bottom: 1px solid #dadce0; padding: 0 0 5px 15px; line-height: 26px; font-size: 14.400px; }
.marks a { display: flex; align-items: center; }
.marks span { margin-left: 9px; margin-top: -1px; }
.marks .m1 span { margin-left: 10px; }
.m1 { width: 75px; } .m2 { width: 99px; } .m3 { width: 77px; } .m4 { width: 104px; }

.page { height: 634px; flex: none; display: flex; position: relative; overflow: hidden; font-size: 12.500px; }
.side { width: 230px; flex: none; background: #222d32; color: #b8c7ce; --hole: #222d32; }
.brand { height: 50px; background: #367fa9; color: #fff; font: 20px/50px "Liberation Sans", sans-serif; text-align: center; }
.sidehead { height: 37px; padding-left: 15px; line-height: 36px; font-size: 10.750px; color: #4b646f; background: #1a2226; }
.item { height: 44px; display: flex; align-items: center; padding: 0 0 2px 18px; fill: #b8c7ce; font-size: 12.550px; }
.item svg { margin-right: 5px; }
.item svg[width="14"] { margin-right: 9px; }
.item svg[width="13"] { margin-right: 10px; }
.item svg[width="16"] { margin-right: 7px; }
.hole { fill: var(--hole); }
.main { width: 1121px; background: #ecf0f5; }
.navbar { height: 50px; background: #3c8dbc; display: flex; align-items: center; justify-content: space-between; padding: 0 15px; }
.heading { height: 56px; padding: 0 15px; display: flex; align-items: baseline; line-height: 54px; }
.heading h1 { font-size: 21.500px; color: #333; }
.heading small { margin-left: 9px; font-size: 13.400px; color: #777; font-weight: 300; }
.crumb { margin-left: auto; display: flex; align-items: center; align-self: center; height: 20px; font-size: 10.800px; line-height: 20px; margin-top: 3px; fill: #444; color: #444; --hole: #ecf0f5; }
.crumb .home { margin-left: 7px; }
.gt { margin: 0 8px 0 7px; color: #ccc; font-size: 10px; }
.cur { color: #777; }
.box { margin: 0 15px; height: 560px; background: #fff; border-top: 3px solid #d2d6de; border-radius: 3px; }
.box h3 { height: 41px; padding-left: 10px; line-height: 36px; font-size: 16px; color: #444; border-bottom: 1px solid #f4f4f4; }
.frame { margin: 10px 10px 0; width: 1071px; height: 520px; border: 2px solid #eee; border-top-color: #999; border-left-color: #999; padding: 2px; }
.chart { position: relative; height: 520px; border: 1px solid #ececec; border-radius: 3px; font-family: Lato, sans-serif; color: #5b5b5b; }
.chead { height: 58px; display: flex; justify-content: space-between; padding: 15px 15px 0 15px; }
.chead h2 { font: 22.400px/25px "Playfair Display", "Liberation Serif", serif; color: #555; white-space: nowrap; }
.chead p { font-size: 12.620px; line-height: 17px; color: #666; white-space: nowrap; }
.owid { width: 61px; height: 35px; background: #002147; border-bottom: 4px solid #dc2a20; color: #fff; font-size: 12.200px; line-height: 13px; text-align: center; padding-top: 3px; white-space: nowrap; }
.map { width: 1060px; height: 414px; }
.c path { stroke: #6c7076; stroke-width: 1.300; stroke-linejoin: round; }
.c .k6 { fill: #67000d; } .c .k5 { fill: #860811; } .c .k4 { fill: #a50f15; } .c .k3 { fill: #cb181d; } .c .k2 { fill: #ef3b2c; } .c .k1a { fill: #fb6a4a; } .c .k1 { fill: #fcbba1; }
.c .kn { fill: #eee; stroke: #bbb; }
.c .ln, .c .isl { fill: none; }
.c .isl { stroke-width: 2; }
.c .india { fill: #67000d; stroke: #000; stroke-width: 4; }
.legend { font: 12px Lato, sans-serif; fill: #111; text-anchor: middle; }
.select { position: absolute; left: 933px; top: 63px; width: 110px; height: 22px; border: 1px solid #ccc; border-radius: 4px; background: #fff; display: flex; align-items: center; justify-content: space-between; padding: 0 4px 0 6px; font-size: 12.400px; color: #333; }
.tip { position: absolute; left: 681px; top: 86px; width: 258px; height: 134px; border-radius: 2px; background: rgba(255,255,255,.92); box-shadow: 0 1px 3px rgba(0,0,0,.3); color: #333; }
.tname { height: 40px; line-height: 40px; text-align: center; font-size: 14.500px; }
.tbody { display: flex; padding-left: 12px; }
.tval { margin-left: 12px; padding-top: 9px; display: flex; flex-direction: column; white-space: nowrap; }
.tval b { font-size: 16px; line-height: 21px; color: #555; }
.tval span { font-size: 12.900px; line-height: 16px; }
.tclick { text-align: center; color: #888; font-size: 12.900px; line-height: 16px; margin-top: 6px; }
.hand { position: absolute; left: 661px; top: 228px; }
.scroll { width: 15px; background: #f1f1f1; display: flex; flex-direction: column; }
.thumb { width: 11px; height: 319px; margin-left: 2px; background: #c1c1c1; }
.sdown { position: absolute; right: 0; bottom: 0; }
```
